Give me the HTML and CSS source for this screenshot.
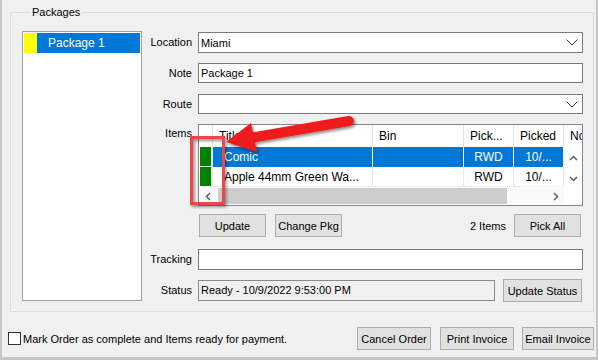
FILE: index.html
```html
<!DOCTYPE html>
<html lang="en">
<head>
    <meta charset="UTF-8">
    <title>Packages</title>
    <link rel="stylesheet" href="styles.css">
</head>
<body>
    <div class="window">
        <fieldset class="group">
            <legend>Packages</legend>
            <div class="group-body">
                <div class="listbox">
                    <div class="list-item selected">
                        <span class="swatch"></span>
                        <span class="list-text">Package 1</span>
                    </div>
                </div>
                <div class="form">
                    <div class="row row-location">
                        <label class="label">Location</label>
                        <div class="combo">
                            <span class="combo-text">Miami</span>
                            <svg class="combo-arrow" width="12" height="7" viewBox="0 0 12 7"><polyline points="0.5,0.5 6,6 11.5,0.5" fill="none" stroke="#333" stroke-width="1"/></svg>
                        </div>
                    </div>
                    <div class="row row-note">
                        <label class="label">Note</label>
                        <div class="textbox">Package 1</div>
                    </div>
                    <div class="row row-route">
                        <label class="label">Route</label>
                        <div class="combo">
                            <span class="combo-text"></span>
                            <svg class="combo-arrow" width="12" height="7" viewBox="0 0 12 7"><polyline points="0.5,0.5 6,6 11.5,0.5" fill="none" stroke="#333" stroke-width="1"/></svg>
                        </div>
                    </div>
                    <div class="row row-items">
                        <label class="label label-top">Items</label>
                        <div class="grid">
                            <div class="th th-ind"></div>
                            <div class="th">Title</div>
                            <div class="th">Bin</div>
                            <div class="th">Pick...</div>
                            <div class="th">Picked</div>
                            <div class="th th-last">Notes</div>

                            <div class="ind"><span class="ind-fill"></span></div>
                            <div class="td sel">Comic</div>
                            <div class="td sel"></div>
                            <div class="td sel center">RWD</div>
                            <div class="td sel center">10/...</div>
                            <div class="vscroll">
                                <svg width="9" height="6" viewBox="0 0 9 6"><polyline points="1,5 4.5,1.5 8,5" fill="none" stroke="#606060" stroke-width="1.5"/></svg>
                                <svg width="9" height="6" viewBox="0 0 9 6"><polyline points="1,1 4.5,4.5 8,1" fill="none" stroke="#606060" stroke-width="1.5"/></svg>
                            </div>

                            <div class="ind"><span class="ind-fill"></span></div>
                            <div class="td">Apple 44mm Green Wa...</div>
                            <div class="td"></div>
                            <div class="td center">RWD</div>
                            <div class="td center">10/...</div>

                            <div class="hscroll">
                                <span class="sb-arrow">
                                    <svg width="6" height="9" viewBox="0 0 6 9"><polyline points="5,1 1.5,4.5 5,8" fill="none" stroke="#606060" stroke-width="1.5"/></svg>
                                </span>
                                <span class="sb-track"><span class="sb-thumb" style="width: 289px"></span></span>
                                <span class="sb-arrow">
                                    <svg width="6" height="9" viewBox="0 0 6 9"><polyline points="1,1 4.5,4.5 1,8" fill="none" stroke="#606060" stroke-width="1.5"/></svg>
                                </span>
                            </div>
                            <div class="corner"></div>
                        </div>
                    </div>
                    <div class="row row-buttons">
                        <span class="label"></span>
                        <button class="btn btn-update">Update</button>
                        <button class="btn btn-change">Change Pkg</button>
                        <span class="count">2 Items</span>
                        <button class="btn btn-pick">Pick All</button>
                    </div>
                    <div class="row row-tracking">
                        <label class="label">Tracking</label>
                        <div class="textbox"></div>
                    </div>
                    <div class="row row-status">
                        <label class="label">Status</label>
                        <div class="status-box">Ready - 10/9/2022 9:53:00 PM</div>
                        <button class="btn btn-status">Update Status</button>
                    </div>
                </div>
            </div>
        </fieldset>

        <div class="footer">
            <span class="checkbox"></span>
            <span class="check-text">Mark Order as complete and Items ready for payment.</span>
            <button class="btn btn-cancel">Cancel Order</button>
            <button class="btn btn-print">Print Invoice</button>
            <button class="btn btn-email">Email Invoice</button>
        </div>

        <!-- annotation drawn over the screenshot -->
        <svg class="annotation" width="598" height="360" viewBox="0 0 598 360">
            <defs>
                <filter id="shadow" x="-20%" y="-20%" width="140%" height="140%">
                    <feDropShadow dx="1.5" dy="2" stdDeviation="1.5" flood-color="#000" flood-opacity="0.45"/>
                </filter>
            </defs>
            <rect x="191.5" y="137.5" width="32" height="66" fill="none" stroke="#ec4646" stroke-width="3" filter="url(#shadow)"/>
            <g filter="url(#shadow)" fill="#ee1c1c">
                <line x1="250" y1="138" x2="349" y2="121" stroke="#ee1c1c" stroke-width="10" stroke-linecap="round"/>
                <polygon points="226,142 251,123 257,152"/>
            </g>
        </svg>
    </div>
</body>
</html>
```

FILE: styles.css
```css
body {
    margin: 0;
    padding: 0;
    background-color: #f0f0f0;
    font-family: 'Liberation Sans', Arial, sans-serif;
    font-size: 11px;
    color: #000;
}
.window {
    position: relative;
    width: 598px;
    height: 360px;
    box-sizing: border-box;
    border-left: 2px solid #c6c6c6;
    border-right: 2px solid #c6c6c6;
    border-bottom: 3px solid #c6c6c6;
    background-color: #f0f0f0;
    overflow: hidden;
}
.group {
    margin: 6px 2px 0 8px;
    padding: 12px 10px 9px 11px;
    border: 1px solid #dcdcdc;
    min-width: 0;
}
.group legend {
    margin-left: 8px;
    padding: 0 2px;
    line-height: 13px;
    font-size: 11px;
}
.group-body {
    display: flex;
}
.listbox {
    width: 120px;
    height: 270px;
    box-sizing: border-box;
    border: 1px solid #a0a0a0;
    background-color: #fff;
    padding: 1px;
}
.list-item {
    display: flex;
    height: 20px;
}
.swatch {
    width: 13px;
    background-color: #ffff00;
}
.list-item.selected .list-text {
    flex: 1;
    background-color: #0078d7;
    color: #fff;
    font-size: 12px;
    line-height: 20px;
    padding-left: 11px;
}
.form {
    flex: 1;
    margin-top: 1px;
    display: flex;
    flex-direction: column;
}
.row {
    display: flex;
    align-items: center;
}
.label {
    width: 50px;
    margin-right: 6px;
    text-align: right;
    flex-shrink: 0;
    line-height: 13px;
}
.label-top {
    align-self: flex-start;
    margin-top: 3px;
}
.row-note { margin-top: 10px; }
.row-route { margin-top: 11px; }
.row-items { margin-top: 10px; align-items: flex-start; }
.row-buttons { margin-top: 8px; }
.row-tracking { margin-top: 12px; }
.row-status { margin-top: 9px; }

.combo, .textbox {
    flex: 1;
    height: 21px;
    box-sizing: border-box;
    border: 1px solid #7a7a7a;
    background-color: #fff;
    display: flex;
    align-items: center;
    padding-left: 2px;
}
.row-note .textbox { height: 20px; }
.row-route .combo { height: 20px; }
.combo-text {
    flex: 1;
}
.combo-arrow {
    margin-right: 4px;
}
.grid {
    display: grid;
    grid-template-columns: 14px 160px 91px 50px 50px 18px;
    grid-template-rows: 22px 20px 20px 18px;
    border: 1px solid #828790;
    background-color: #fff;
    font-size: 12px;
}
.th {
    border-right: 1px solid #e5e5e5;
    padding-left: 6px;
    line-height: 22px;
    white-space: nowrap;
    overflow: hidden;
}
.th-ind {
    padding: 0;
}
.th-last {
    border-right: none;
}
.ind {
    padding: 0 1px 1px 1px;
    border-right: 1px solid #e5e5e5;
    display: flex;
}
.ind-fill {
    flex: 1;
    background-color: #008000;
}
.td {
    padding-left: 11px;
    line-height: 20px;
    white-space: nowrap;
    overflow: hidden;
    border-right: 1px dotted #d8d8d8;
    border-bottom: 1px dotted #e0e0e0;
    box-sizing: border-box;
}
.td.center {
    padding-left: 0;
    text-align: center;
}
.td.sel {
    background-color: #0078d7;
    color: #fff;
    border-right: 1px solid #fff;
    border-bottom: none;
}
.vscroll {
    grid-column: 6;
    grid-row: 2 / 4;
    display: flex;
    flex-direction: column;
    align-items: center;
    justify-content: space-between;
    padding: 8px 0 5px 0;
    background-color: #fff;
}
.hscroll {
    grid-column: 1 / 6;
    grid-row: 4;
    display: flex;
    align-items: center;
    background-color: #fafafa;
}
.sb-arrow {
    width: 17px;
    height: 18px;
    display: flex;
    align-items: center;
    justify-content: center;
}
.sb-track {
    flex: 1;
    height: 18px;
    display: flex;
    align-items: center;
}
.sb-thumb {
    height: 16px;
    margin-left: 2px;
    background-color: #cdcdcd;
}
.corner {
    grid-column: 6;
    grid-row: 4;
    background-color: #fff;
}
.btn {
    height: 23px;
    box-sizing: border-box;
    border: 1px solid #adadad;
    background-color: #e1e1e1;
    font-family: 'Liberation Sans', Arial, sans-serif;
    font-size: 11px;
    color: #000;
    padding: 0;
}
.btn-update {
    width: 67px;
    margin-left: 1px;
}
.btn-change {
    width: 67px;
    margin-left: 9px;
}
.count {
    margin-left: auto;
    margin-right: 8px;
}
.btn-pick {
    width: 67px;
    margin-right: 2px;
}
.status-box {
    width: 297px;
    height: 21px;
    box-sizing: border-box;
    border: 1px solid #8a8a8a;
    background-color: #f0f0f0;
    padding-left: 2px;
    line-height: 19px;
}
.btn-status {
    width: 79px;
    margin-left: auto;
    margin-right: 1px;
}
.footer {
    display: flex;
    align-items: center;
    margin-top: 15px;
    padding: 0 2px 0 6px;
}
.checkbox {
    width: 13px;
    height: 13px;
    box-sizing: border-box;
    border: 1px solid #333;
    background-color: #fff;
    margin-right: 2px;
}
.btn-cancel {
    width: 74px;
    margin-left: auto;
}
.btn-print {
    width: 74px;
    margin-left: 9px;
}
.btn-email {
    width: 72px;
    margin-left: 8px;
}
.annotation {
    position: absolute;
    left: -2px;
    top: 0;
    pointer-events: none;
}
```
